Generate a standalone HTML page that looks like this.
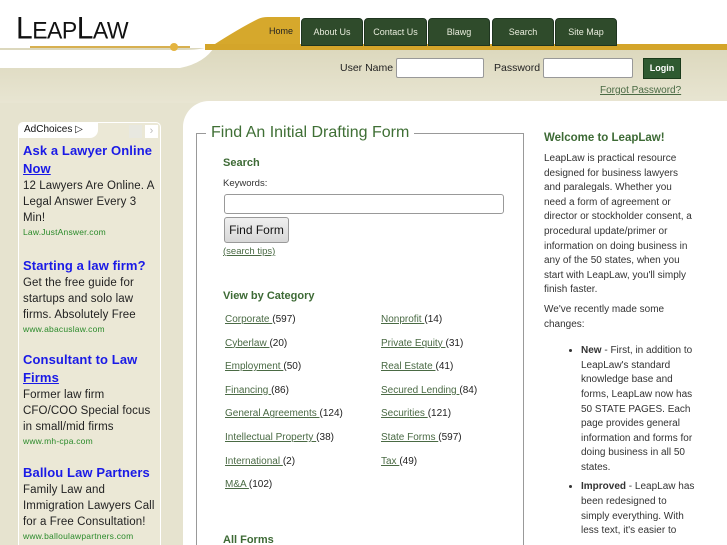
<!DOCTYPE html>
<html style="overflow:hidden"><head><meta charset="utf-8"><style>
*{margin:0;padding:0;box-sizing:border-box}
body{width:727px;height:545px;overflow:hidden;background:#e6e3cf;font-family:"Liberation Sans",sans-serif;position:relative}
.abs{position:absolute}
#top{left:0;top:0;width:727px;height:48px;background:#fff}
#band{left:0;top:48px;width:727px;height:55px;background:linear-gradient(#dcd8bd,#e8e5d2)}
#gold{left:205px;top:44px;width:522px;height:6px;background:#d4a52a}
.tab{top:18px;height:28px;background:#2f4b2b;color:#e8ecdc;font-size:9px;text-align:center;line-height:27px;border-radius:4px 4px 0 0;border:1px solid #1f3520}
.logo{left:16px;top:12px;font-family:"Liberation Sans",sans-serif;font-size:30px;color:#111;letter-spacing:-0.5px;transform:scaleY(1.05)}
.logo small{font-size:23px}
.lbl{font-size:10.5px;color:#222;top:62px}
.inp{top:58px;height:20px;background:#fff;border:1px solid #999;border-radius:2px}
#main{left:183px;top:101px;width:544px;height:444px;background:#fff;border-top-left-radius:26px}
#ad{left:18px;top:122px;width:143px;height:423px;background:#ebe8d6;border:1px solid #fff;border-bottom:none;border-radius:5px 5px 0 0;overflow:hidden}
.adt{color:#1a1ae6;font-weight:bold;font-size:13px;line-height:18px;letter-spacing:0.1px}
.adt u{text-decoration:underline}
.adb{color:#222;font-size:11.5px;line-height:16px;letter-spacing:0.1px;width:136px}
.adu{color:#2a8a2a;font-size:8.5px;line-height:12px;letter-spacing:0.2px}
#fs{left:196px;top:133px;width:328px;height:420px;border:1px solid #999}
.leg{left:206px;top:124px;background:#fff;padding:0 5px;font-size:16px;color:#3f6f35}
h4{font-size:11px;color:#3d6a35;font-weight:bold}
.cat{font-size:10px;color:#222}
.cat a{color:#4a6a44;text-decoration:underline}
.rt{font-size:10px;color:#333;line-height:14.6px}
</style></head><body>
<div class="abs" id="top"></div>
<div class="abs" id="band"></div>
<svg class="abs" style="left:0;top:0" width="727" height="110">
<path d="M0 50 L185 50 Q205 50 215 44 L262 18 L300 18 L300 46 L215 46 Q205 63 180 68 L0 68 Z" fill="#fff"/>
<path d="M215 44 Q240 28 258 19 Q262 17 268 17 L300 17 L300 46 L205 46 Z" fill="#d6a82c"/>
<path d="M30 47 L190 47" stroke="#d7b050" stroke-width="2"/>
<circle cx="174" cy="47" r="4" fill="#e4b440"/>
</svg>
<div class="abs" id="gold"></div>
<div class="abs logo">L<small>EAP</small>L<small>AW</small></div>
<div class="abs" style="left:262px;top:18px;width:38px;height:28px;font-size:9px;line-height:27px;text-align:center;color:#222">Home</div>
<div class="abs tab" style="left:301px;width:62px">About Us</div>
<div class="abs tab" style="left:364px;width:63px">Contact Us</div>
<div class="abs tab" style="left:428px;width:62px">Blawg</div>
<div class="abs tab" style="left:492px;width:62px">Search</div>
<div class="abs tab" style="left:555px;width:62px">Site Map</div>
<div class="abs lbl" style="left:340px">User Name</div>
<div class="abs inp" style="left:396px;width:88px"></div>
<div class="abs lbl" style="left:494px">Password</div>
<div class="abs inp" style="left:543px;width:90px"></div>
<div class="abs" style="left:643px;top:58px;width:38px;height:21px;background:#2f5a31;border:1px solid #1a3a1a;color:#fff;font-size:9px;font-weight:bold;text-align:center;line-height:19px">Login</div>
<div class="abs" style="left:600px;top:85px;font-size:10px;color:#4a6a44;text-decoration:underline">Forgot Password?</div>
<div class="abs" id="main"></div>
<div class="abs" id="ad">
<div style="position:absolute;left:-1px;top:-1px;width:80px;height:16px;background:#fff;border-radius:4px 0 8px 0;font-size:10px;padding:2px 0 0 6px;color:#111">AdChoices ▷</div>
<div style="position:absolute;left:110px;top:2px;width:13px;height:13px;background:#e8e8e0"></div>
<div style="position:absolute;left:126px;top:2px;width:13px;height:13px;background:#fff;color:#bbb;font-size:11px;line-height:12px;text-align:center">›</div>
<div style="position:absolute;left:4px;top:19px;width:139px">
<div class="adt">Ask a Lawyer Online <u>Now</u></div>
<div class="adb">12 Lawyers Are Online. A Legal Answer Every 3 Min!</div>
<div class="adu">Law.JustAnswer.com</div>
<div class="adt" style="margin-top:19px">Starting a law firm?</div>
<div class="adb">Get the free guide for startups and solo law firms. Absolutely Free</div>
<div class="adu">www.abacuslaw.com</div>
<div class="adt" style="margin-top:16px">Consultant to Law <u>Firms</u></div>
<div class="adb">Former law firm CFO/COO Special focus in small/mid firms</div>
<div class="adu">www.mh-cpa.com</div>
<div class="adt" style="margin-top:17px">Ballou Law Partners</div>
<div class="adb">Family Law and Immigration Lawyers Call for a Free Consultation!</div>
<div class="adu">www.balloulawpartners.com</div>
</div></div>
<div class="abs" id="fs"></div>
<div class="abs leg">Find An Initial Drafting Form</div>
<h4 class="abs" style="left:223px;top:157px">Search</h4>
<div class="abs" style="left:223px;top:178px;font-size:9.5px;color:#333">Keywords:</div>
<div class="abs" style="left:224px;top:194px;width:280px;height:20px;border:1px solid #999;border-radius:3px;background:#fff"></div>
<div class="abs" style="left:224px;top:217px;width:65px;height:26px;border:1px solid #999;border-radius:3px;background:linear-gradient(#f0f0f0,#d8d8d8);font-size:12px;line-height:25px;text-align:center;color:#111">Find Form</div>
<div class="abs" style="left:223px;top:246px;font-size:9.5px;color:#4a6a44;text-decoration:underline">(search tips)</div>
<h4 class="abs" style="left:223px;top:290px">View by Category</h4>
<div class="abs cat" style="left:225px;top:308px;line-height:23.6px">
<a>Corporate </a>(597)<br><a>Cyberlaw </a>(20)<br><a>Employment </a>(50)<br><a>Financing </a>(86)<br><a>General Agreements </a>(124)<br><a>Intellectual Property </a>(38)<br><a>International </a>(2)<br><a>M&amp;A </a>(102)</div>
<div class="abs cat" style="left:381px;top:308px;line-height:23.6px">
<a>Nonprofit </a>(14)<br><a>Private Equity </a>(31)<br><a>Real Estate </a>(41)<br><a>Secured Lending </a>(84)<br><a>Securities </a>(121)<br><a>State Forms </a>(597)<br><a>Tax </a>(49)</div>
<h4 class="abs" style="left:223px;top:534px">All Forms</h4>
<h4 class="abs" style="left:544px;top:132px;font-size:11.5px">Welcome to LeapLaw!</h4>
<div class="abs rt" style="left:544px;top:152px;width:151px">LeapLaw is practical resource designed for business lawyers and paralegals. Whether you need a form of agreement or director or stockholder consent, a procedural update/primer or information on doing business in any of the 50 states, when you start with LeapLaw, you'll simply finish faster.
<p style="margin-top:5px;width:135px">We've recently made some changes:</p>
<ul style="margin:12px 0 0 37px;width:115px">
<li><b>New</b> - First, in addition to LeapLaw's standard knowledge base and forms, LeapLaw now has 50 STATE PAGES. Each page provides general information and forms for doing business in all 50 states.</li>
<li style="margin-top:5px"><b>Improved</b> - LeapLaw has been redesigned to simply everything. With less text, it's easier to</li></ul></div>
</body></html>
